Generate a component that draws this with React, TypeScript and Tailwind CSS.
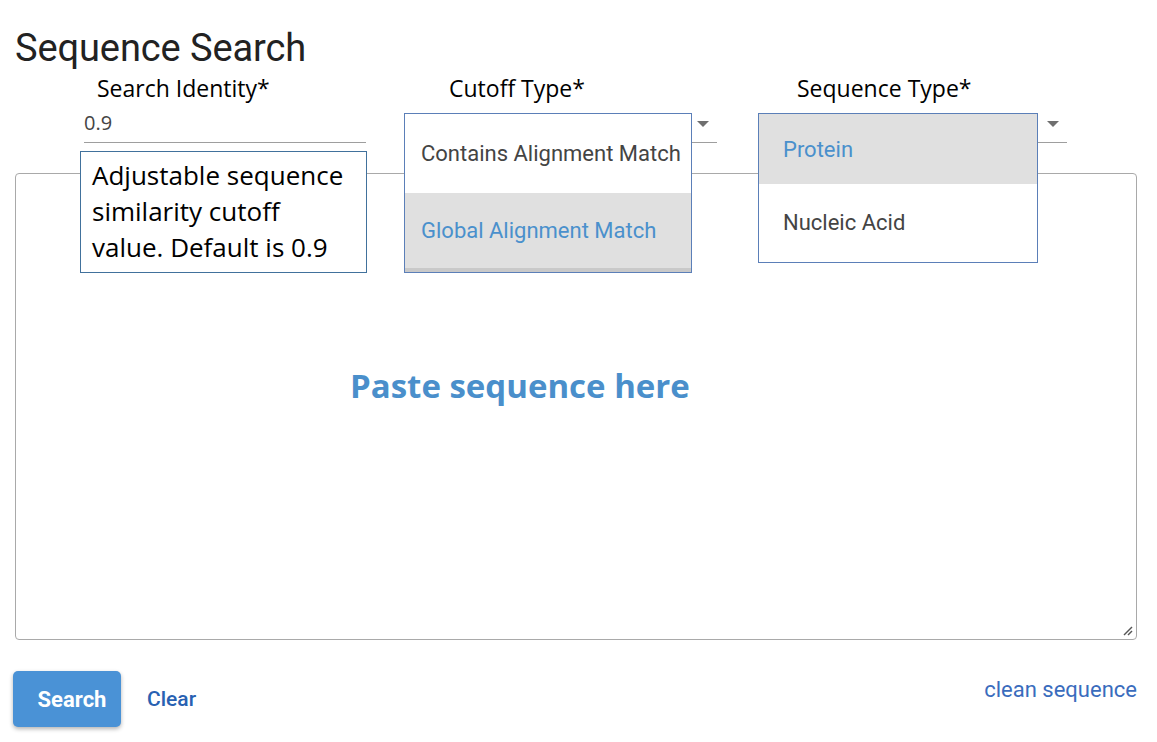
import React from "react";

const calibri = { fontFamily: '"Open Sans", "Lato", sans-serif' };

function Caret() {
  return (
    <svg width="12" height="7" viewBox="0 0 12 7" className="block">
      <path d="M0 0 L12 0 L6 6 Z" fill="#6f6f6f" />
    </svg>
  );
}

export default function App() {
  return (
    <div className="relative w-[1157px] h-[742px] bg-white overflow-hidden font-['Roboto',sans-serif]">
      {/* Title */}
      <div className="h-[72px] pl-[15px] pt-[26px]">
        <h1 className="text-[38px] leading-[44px] text-[#222] font-normal tracking-[-0.1px]">Sequence Search</h1>
      </div>

      {/* Fields row */}
      <div className="flex h-[101px]">
        <div className="ml-[84px] w-[282px] flex flex-col">
          <div className="pl-[13px] h-[32px] text-[23px] leading-[32px] text-black font-['Open_Sans',sans-serif]">Search Identity*</div>
          <div className="h-[39px] pt-[6px] text-[20px] leading-[26px] text-[#444] font-['Open_Sans',sans-serif] border-b border-[#9e9e9e]">0.9</div>
        </div>
        <div className="ml-[38px] w-[313px] flex flex-col">
          <div className="pl-[45px] h-[32px] text-[23px] leading-[32px] text-black font-['Open_Sans',sans-serif]">Cutoff Type*</div>
          <div className="h-[39px] flex items-start justify-end pr-[8px] pt-[17px] border-b border-[#9e9e9e]">
            <Caret />
          </div>
        </div>
        <div className="ml-[41px] w-[309px] flex flex-col">
          <div className="pl-[39px] h-[32px] text-[23px] leading-[32px] text-black font-['Open_Sans',sans-serif]">Sequence Type*</div>
          <div className="h-[39px] flex items-start justify-end pr-[8px] pt-[17px] border-b border-[#9e9e9e]">
            <Caret />
          </div>
        </div>
      </div>

      {/* Textarea */}
      <div className="ml-[15px] w-[1122px] h-[467px] border border-[#a9a9a9] rounded-[4px] relative">
        <div className="pl-[334px] pt-[192px] text-[33px] leading-[40px] font-bold text-[#4a8fcb] font-['Open_Sans',sans-serif]">
          Paste sequence here
        </div>
        <svg width="10" height="10" viewBox="0 0 10 10" className="absolute right-[3px] bottom-[3px]">
          <line x1="1" y1="9" x2="9" y2="1" stroke="#555" strokeWidth="1.4" />
          <line x1="5" y1="9" x2="9" y2="5" stroke="#555" strokeWidth="1.4" />
        </svg>
      </div>

      {/* Bottom row */}
      <div className="flex items-start pl-[13px] pr-[20px] pt-[31px]">
        <button className="w-[108px] h-[56px] pl-[10px] rounded-[5px] bg-[#4a92d6] text-white text-[22px] font-bold shadow-[0_2px_4px_rgba(0,0,0,0.3)]">
          Search
        </button>
        <div className="ml-[26px] mt-[14px] text-[21px] leading-[28px] font-medium text-[#2861b2]">Clear</div>
        <div className="ml-auto mt-[5px] text-[22px] leading-[28px] text-[#3a6cbd]">clean sequence</div>
      </div>

      {/* Tooltip overlay */}
      <div
        className="absolute left-[80px] top-[151px] w-[287px] h-[122px] bg-white border border-[#41719c] pl-[11px] pt-[5px] text-[26px] leading-[36px] text-black whitespace-nowrap"
        style={calibri}
      >
        Adjustable sequence
        <br />
        similarity cutoff
        <br />
        value. Default is 0.9
      </div>

      {/* Cutoff dropdown overlay */}
      <div className="absolute left-[404px] top-[113px] w-[288px] h-[160px] bg-white border border-[#5b7fb8] flex flex-col">
        <div className="h-[79px] flex items-center pl-[16px] text-[22px] text-[#444] bg-white">Contains Alignment Match</div>
        <div className="h-[75px] flex items-center pl-[16px] text-[22px] text-[#4a90cc] bg-[#e0e0e0]">Global Alignment Match</div>
        <div className="flex-1 bg-[#c9c9c9]" />
      </div>

      {/* Sequence type dropdown overlay */}
      <div className="absolute left-[758px] top-[113px] w-[280px] h-[150px] bg-white border border-[#5b7fb8] flex flex-col">
        <div className="h-[70px] flex items-center pl-[24px] text-[22px] text-[#4a90cc] bg-[#e0e0e0]">Protein</div>
        <div className="flex-1 flex items-center pl-[24px] pb-[2px] text-[22px] text-[#444] bg-white">Nucleic Acid</div>
      </div>
    </div>
  );
}
